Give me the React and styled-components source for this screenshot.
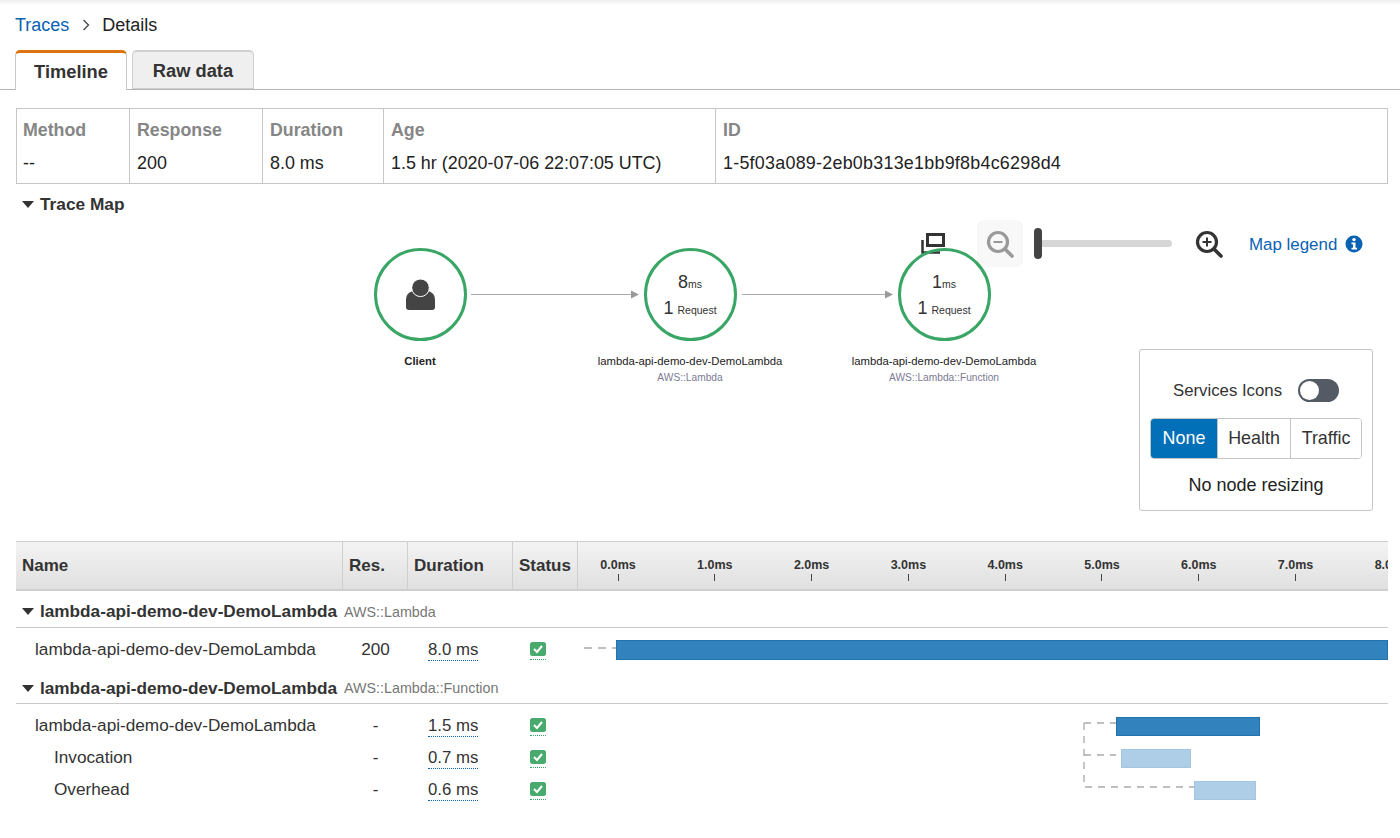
import React from "react";
import styled, { createGlobalStyle } from "styled-components";

const Global = createGlobalStyle`
  html, body { margin: 0; padding: 0; background: #fff; }
  body { font-family: "Liberation Sans", Arial, sans-serif; color: #16191f; font-size: 17.2px; }
  * { box-sizing: border-box; }
`;

const Page = styled.div`width: 1400px; height: 838px; overflow: hidden; background: #fff;`;
const TopStrip = styled.div`height: 4px; background: linear-gradient(#efefef, #fbfbfb);`;
const Crumbs = styled.nav`height: 42px; padding-left: 15px; display: flex; align-items: center; gap: 12.5px; font-size: 18px;`;
const CrumbLink = styled.a`color: #0a62b5;`;
const CrumbText = styled.span`color: #222;`;
const TabBar = styled.div`
  margin-top: 4px; height: 40px; padding-left: 15px; display: flex; gap: 5px;
  border-bottom: 1px solid #b4b4b4;
`;
const Tab = styled.div`
  width: ${p => p.$w}px; height: ${p => (p.$active ? 40 : 39)}px; display: flex; align-items: center; justify-content: center;
  font-weight: bold; font-size: 18.3px; color: #333; border-radius: 5px 5px 0 0;
  padding-top: ${p => (p.$active ? 0 : 2)}px;
  background: ${p => (p.$active ? "#fff" : "#efefef")};
  border: 1px solid ${p => (p.$active ? "#c8c8c8" : "#cfcfcf")};
  border-top: ${p => (p.$active ? "3px solid #dd7410" : "2px solid #d0d0d0")};
  border-bottom: ${p => (p.$active ? "none" : "1px solid #cfcfcf")};
  z-index: 1;
`;
const Content = styled.div`padding: 0 12px 0 16px;`;
const Summary = styled.div`
  margin-top: 18px; height: 76px; display: grid; grid-template-columns: 112px 133px 121px 332px 1fr;
  border: 1px solid #c6c6c6; border-width: 1.5px 1px;
`;
const SummaryCol = styled.div`
  padding: 11px 0 0 ${p => (p.$first ? 6 : 7)}px; border-left: ${p => (p.$first ? "none" : "1px solid #c6c6c6")};
  display: flex; flex-direction: column; gap: 14px;
`;
const SummaryHead = styled.div`font-weight: bold; color: #868686; font-size: 17.8px; line-height: 20px;`;
const SummaryVal = styled.div`color: #222; font-size: 17.9px; line-height: 19px; letter-spacing: ${p => p.$spread}px;`;
const Caret = styled.span`
  width: 0; height: 0; border-left: 6px solid transparent; border-right: 6px solid transparent;
  border-top: 7px solid #333; margin: 0 6px;
`;
const MapHeading = styled.div`
  height: 36px; padding-top: 4px; display: flex; align-items: center; font-weight: bold; font-size: 17.3px; color: #333;
`;
const Canvas = styled.div`position: relative; height: 321px;`;
const Edges = styled.svg`position: absolute; left: 0; top: 0; width: 100%; height: 100%;`;
const Node = styled.div`
  position: absolute; left: ${p => p.$x}px; top: 28px; width: 260px;
  display: flex; flex-direction: column; align-items: center;
`;
const Circle = styled.div`
  width: 93px; height: 93px; border-radius: 50%; border: 3px solid #3aa666; padding-top: ${p => p.$pt || 0}px;
  display: flex; flex-direction: column; align-items: center; justify-content: center; gap: 4px; color: #333;
`;
const Metric = styled.div`display: flex; align-items: baseline; gap: ${p => p.$gap}px; line-height: 20px;`;
const Big = styled.span`font-size: 18px;`;
const Small = styled.span`font-size: 10.5px;`;
const NodeName = styled.div`
  margin-top: 13px; font-size: 11.3px; line-height: 14px; color: #222; font-weight: ${p => (p.$bold ? "bold" : "normal")};
`;
const NodeType = styled.div`margin-top: 3px; font-size: 10.2px; line-height: 14px; color: #7b7b92;`;
const Controls = styled.div`position: absolute; left: 905px; top: 0; height: 47px; display: flex; align-items: center;`;
const IconSlot = styled.div`display: flex; margin-left: ${p => p.$ml}px;`;
const ZoomBox = styled.div`
  width: 46px; height: 47px; background: #f8f8f8; border-radius: 6px; display: flex;
  align-items: center; justify-content: center; margin-left: 31px;
`;
const Handle = styled.div`width: 8px; height: 31px; background: #444; border-radius: 4px; margin-left: 11px;`;
const Track = styled.div`width: 130px; height: 7px; background: #d6d6d6; border-radius: 0 4px 4px 0;`;
const Legend = styled.a`color: #0a62b5; font-size: 16.9px; margin: 2px 8px 0 26px;`;
const Panel = styled.div`
  position: absolute; left: 1123px; top: 129px; width: 234px; height: 162px; background: #fff;
  border: 1px solid #c4c4c4; border-radius: 3px; padding: 29px 11px 0; display: flex; flex-direction: column; align-items: center;
`;
const ToggleRow = styled.div`display: flex; align-items: center; gap: 16px; height: 24px; color: #333; font-size: 16.8px;`;
const Toggle = styled.div`
  width: 41px; height: 23px; margin-top: -1px; border-radius: 12px; background: #545b64; padding: 2px;
`;
const Knob = styled.div`width: 19px; height: 19px; border-radius: 50%; background: #fff;`;
const Segmented = styled.div`
  margin-top: 15px; width: 212px; height: 41px; display: grid; grid-template-columns: 66px 73px 1fr;
  border: 1px solid #c4c4c4; border-radius: 4px; overflow: hidden; flex: none;
`;
const Seg = styled.div`
  display: flex; align-items: center; justify-content: center; font-size: 17.9px;
  background: ${p => (p.$on ? "#0270b9" : "#fff")}; color: ${p => (p.$on ? "#fff" : "#333")};
  border-left: ${p => (p.$first ? "none" : "1px solid #c4c4c4")};
`;
const PanelNote = styled.div`margin-top: 16px; color: #222; font-size: 18px; line-height: 20px;`;
const Timeline = styled.div`position: relative;`;
const COLS = "327px 65px 105px 65px 1fr";
const HeadRow = styled.div`
  height: 50px; display: grid; grid-template-columns: ${COLS}; border: solid #cfcfcf; border-width: 1px 0 2px;
  background: linear-gradient(#f3f3f3, #e0e0e0);
`;
const HeadCell = styled.div`
  display: flex; align-items: center; padding: 1px 0 0 6px; font-weight: bold; font-size: 17px; color: #333;
  border-right: 1px solid #cfcfcf;
`;
const Axis = styled.div`display: flex; overflow: hidden;`;
const Tick = styled.div`
  flex: none; width: 96.8px; display: flex; flex-direction: column; align-items: center; padding-top: 16px;
  font-weight: bold; font-size: 12.5px; line-height: 14px; color: #333;
  &:first-child { margin-left: -8.4px; }
  &::after { content: ""; width: 1px; height: 7px; background: #444; margin-top: 2px; }
`;
const GroupRow = styled.div`
  margin-top: ${p => p.$mt}px; height: ${p => p.$h}px; padding-bottom: 1px; display: flex; align-items: center;
  border-bottom: 1.5px solid #c9c9c9;
`;
const GroupName = styled.span`font-weight: bold; font-size: 17.2px; color: #333;`;
const GroupType = styled.span`font-size: 14.3px; color: #777; margin-left: 7px;`;
const Rows = styled.div`position: relative; padding-top: 5px;`;
const Row = styled.div`height: 32px; display: grid; grid-template-columns: ${COLS}; align-items: center;`;
const NameCell = styled.div`padding-left: ${p => p.$indent}px; color: #333;`;
const ResCell = styled.div`text-align: center; color: #333;`;
const DurCell = styled.div`padding: 1px 0 0 20px; font-size: 16.8px;`;
const Dur = styled.span`color: #333; border-bottom: 1px dotted #0a62b5; padding-bottom: 1px;`;
const StatusCell = styled.div`padding-left: 17px; display: flex;`;
const StatusWrap = styled.span`display: flex; margin-top: 3px; padding-bottom: 3px; border-bottom: 1px dotted #3aa666;`;
const Track2 = styled.div`position: relative; height: 100%;`;
const Bar = styled.div`
  position: absolute; top: ${p => p.$top}px; height: ${p => p.$h}px; left: ${p => p.$l}px; width: ${p => p.$w}px;
  background: ${p => (p.$light ? "#aecde6" : "#3182bd")};
  border: 1px solid ${p => (p.$light ? "#a2c5e2" : "#2272ae")};
`;
const Overlay = styled.svg`position: absolute; left: 0; top: 0; width: 1372px; height: 100%; pointer-events: none;`;

const Check = () => (
  <svg width="16" height="14" viewBox="0 0 16 14"><rect width="16" height="14" rx="2.5" fill="#48ab6d" /><path d="M4 7l3 3 5-6" fill="none" stroke="#fff" strokeWidth="2" /></svg>
);
const Magnifier = ({ color, plus, size }) => (
  <svg width={size} height={size} viewBox="0 0 28 28">
    <circle cx="12" cy="12" r="9.5" fill="none" stroke={color} strokeWidth="3.2" />
    <path d="M19 19l7 7" stroke={color} strokeWidth="3.6" strokeLinecap="round" />
    <path d="M7.5 12h9" stroke={color} strokeWidth="2" />
    {plus && <path d="M12 7.5v9" stroke={color} strokeWidth="2" />}
  </svg>
);
const Row1 = ({ name, indent, res, dur, children }) => (
  <Row>
    <NameCell $indent={indent}>{name}</NameCell>
    <ResCell>{res}</ResCell>
    <DurCell><Dur>{dur}</Dur></DurCell>
    <StatusCell><StatusWrap><Check /></StatusWrap></StatusCell>
    <Track2>{children}</Track2>
  </Row>
);

const summary = [
  ["Method", "--"], ["Response", "200"], ["Duration", "8.0 ms"],
  ["Age", "1.5 hr (2020-07-06 22:07:05 UTC)"], ["ID", "1-5f03a089-2eb0b313e1bb9f8b4c6298d4", 0.25],
];
const ticks = ["0.0ms", "1.0ms", "2.0ms", "3.0ms", "4.0ms", "5.0ms", "6.0ms", "7.0ms", "8.0ms"];

export default function App() {
  return (
    <Page>
      <Global />
      <TopStrip />
      <Crumbs>
        <CrumbLink>Traces</CrumbLink>
        <svg width="8" height="12" viewBox="0 0 8 12"><path d="M1.500 1l5 5-5 5" fill="none" stroke="#444" strokeWidth="1.3" /></svg>
        <CrumbText>Details</CrumbText>
      </Crumbs>
      <TabBar>
        <Tab $active $w={112}>Timeline</Tab>
        <Tab $w={122}>Raw data</Tab>
      </TabBar>
      <Content>
        <Summary>
          {summary.map(([h, v, spread], i) => (
            <SummaryCol key={h} $first={i === 0}>
              <SummaryHead>{h}</SummaryHead>
              <SummaryVal $spread={spread || 0}>{v}</SummaryVal>
            </SummaryCol>
          ))}
        </Summary>
        <MapHeading><Caret />Trace Map</MapHeading>
        <Canvas>
          <Edges>
            <path d="M455 74.5H616" stroke="#aaa" strokeWidth="1.2" />
            <path d="M615 70.5l8 4-8 4z" fill="#999" />
            <path d="M726 74.5H870" stroke="#aaa" strokeWidth="1.2" />
            <path d="M869 70.5l8 4-8 4z" fill="#999" />
          </Edges>
          <Controls>
            <IconSlot $ml={0}>
              <svg width="25" height="21" viewBox="0 0 25 21">
                <rect x="6.500" y="1.500" width="16" height="11" fill="#fff" stroke="#333" strokeWidth="3" />
                <path d="M1.500 7v12.500H19" fill="none" stroke="#333" strokeWidth="2.500" />
              </svg>
            </IconSlot>
            <ZoomBox><Magnifier color="#999" size={28} /></ZoomBox>
            <Handle />
            <Track />
            <IconSlot $ml={23}><Magnifier color="#333" plus size={28} /></IconSlot>
            <Legend>Map legend</Legend>
            <svg width="18" height="18" viewBox="0 0 18 18">
              <circle cx="9" cy="9" r="8.500" fill="#0a62b5" />
              <circle cx="9" cy="4.600" r="1.700" fill="#fff" />
              <path d="M6.500 7.500H10.500V12.800H12V14.500H6.500V12.800H8V9.200H6.500z" fill="#fff" />
            </svg>
          </Controls>
          <Node $x={274}>
            <Circle>
              <svg width="29" height="31" viewBox="0 0 29 31">
                <path d="M0 21c0-6 4-9 9-9h11c5 0 9 3 9 9v7c0 2-1 3-3 3H3c-2 0-3-1-3-3z" fill="#444" />
                <circle cx="14.500" cy="8.800" r="8.800" fill="#444" stroke="#fff" strokeWidth="1" />
              </svg>
            </Circle>
            <NodeName $bold>Client</NodeName>
          </Node>
          <Node $x={544}>
            <Circle $pt={3}>
              <Metric $gap={0}><Big>8</Big><Small>ms</Small></Metric>
              <Metric $gap={4}><Big>1</Big><Small>Request</Small></Metric>
            </Circle>
            <NodeName>lambda-api-demo-dev-DemoLambda</NodeName>
            <NodeType>AWS::Lambda</NodeType>
          </Node>
          <Node $x={798}>
            <Circle $pt={3}>
              <Metric $gap={0}><Big>1</Big><Small>ms</Small></Metric>
              <Metric $gap={4}><Big>1</Big><Small>Request</Small></Metric>
            </Circle>
            <NodeName>lambda-api-demo-dev-DemoLambda</NodeName>
            <NodeType>AWS::Lambda::Function</NodeType>
          </Node>
          <Panel>
            <ToggleRow>Services Icons<Toggle><Knob /></Toggle></ToggleRow>
            <Segmented>
              <Seg $on $first>None</Seg>
              <Seg>Health</Seg>
              <Seg>Traffic</Seg>
            </Segmented>
            <PanelNote>No node resizing</PanelNote>
          </Panel>
        </Canvas>
        <Timeline>
          <HeadRow>
            <HeadCell>Name</HeadCell>
            <HeadCell>Res.</HeadCell>
            <HeadCell>Duration</HeadCell>
            <HeadCell>Status</HeadCell>
            <Axis>{ticks.map(t => <Tick key={t}>{t}</Tick>)}</Axis>
          </HeadRow>
          <GroupRow $mt={6} $h={31}><Caret /><GroupName>lambda-api-demo-dev-DemoLambda</GroupName><GroupType>AWS::Lambda</GroupType></GroupRow>
          <Rows>
            <Overlay><path d="M568 20H600" stroke="#aaa" strokeWidth="1.3" strokeDasharray="8 6" fill="none" /></Overlay>
            <Row1 name="lambda-api-demo-dev-DemoLambda" indent={19} res="200" dur="8.0 ms">
              <Bar $top={7} $h={20} $l={38} $w={772} />
            </Row1>
          </Rows>
          <GroupRow $mt={9} $h={30}><Caret /><GroupName>lambda-api-demo-dev-DemoLambda</GroupName><GroupType>AWS::Lambda::Function</GroupType></GroupRow>
          <Rows>
            <Overlay>
              <path d="M1068 19H1100M1068 51H1100" stroke="#aaa" strokeWidth="1.3" strokeDasharray="7 6" fill="none" />
              <path d="M1068 19V83H1178" stroke="#aaa" strokeWidth="1.3" strokeDasharray="7 6" fill="none" />
            </Overlay>
            <Row1 name="lambda-api-demo-dev-DemoLambda" indent={19} res="-" dur="1.5 ms">
              <Bar $top={8} $h={19} $l={538} $w={144} />
            </Row1>
            <Row1 name="Invocation" indent={38} res="-" dur="0.7 ms">
              <Bar $light $top={8} $h={19} $l={543} $w={70} />
            </Row1>
            <Row1 name="Overhead" indent={38} res="-" dur="0.6 ms">
              <Bar $light $top={8} $h={19} $l={616} $w={62} />
            </Row1>
          </Rows>
        </Timeline>
      </Content>
    </Page>
  );
}
